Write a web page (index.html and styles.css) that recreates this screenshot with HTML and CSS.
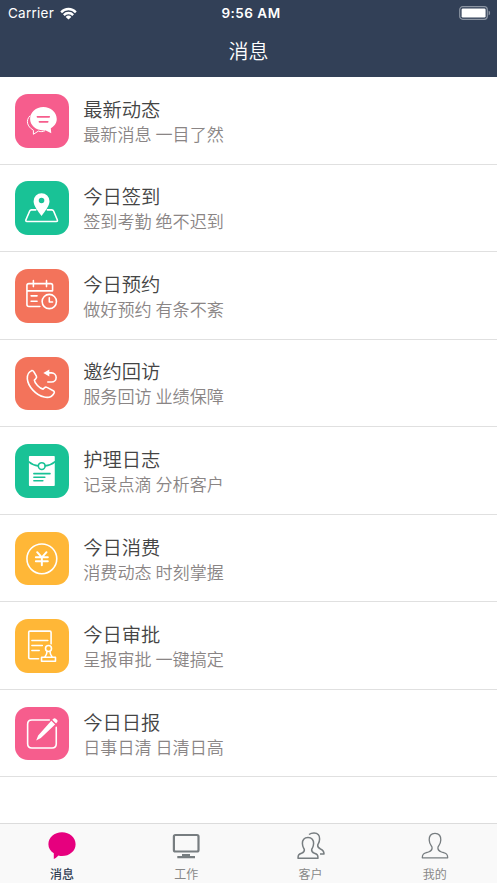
FILE: index.html
```html
<!DOCTYPE html>
<html lang="zh-CN">
<head>
<meta charset="utf-8">
<title>消息</title>
<link rel="stylesheet" href="styles.css">
</head>
<body>
<div class="app">
  <header class="header">
    <div class="status">
      <div class="carrier"><span>Carrier</span>
        <svg class="wifi" viewBox="0 0 17 13"><path d="M0.3 4.4A11.2 11.2 0 0 1 16.7 4.4L15 6.2A8.800 8.800 0 0 0 2 6.2ZM3 7.200A7.400 7.400 0 0 1 14 7.200L12.300 9A5.100 5.100 0 0 0 4.700 9ZM5.700 9.900A3.700 3.700 0 0 1 11.300 9.900L8.500 12.600Z"/></svg>
      </div>
      <div class="time">9:56 AM</div>
      <svg class="battery" viewBox="0 0 32 14"><rect class="shell" x=".7" y=".7" width="27.6" height="12.6" rx="3"/><rect x="2.6" y="2.5" width="24" height="9" rx="1.3"/><path class="cap" d="M29.6 4.7C31.6 5.2 31.6 8.8 29.6 9.3Z"/></svg>
    </div>
    <h1 class="title">消息</h1>
  </header>
  <main class="list">
    <section class="row">
      <svg class="tile pink" viewBox="0 0 54 54">
        <path class="thin" d="M15 22C10.500 26.500 12 32.500 18.500 36.500L18.500 40.500L23.500 37.300C26 38.200 28 38 30 37"/>
        <path class="fill" d="M28.500 13.200C36 13.200 42 18.300 42 25.200C42 29.500 39.500 32.500 36 34.500L36.500 39.500L30.500 36.500C22 37.500 15.200 32 15.200 25.200C15.200 18.300 21 13.200 28.500 13.200Z"/>
        <path class="cut" d="M22.500 23H34.500M24.500 28H33"/>
      </svg>
      <div class="copy"><h2>最新动态</h2><p>最新消息 一目了然</p></div>
    </section>
    <section class="row">
      <svg class="tile green" viewBox="0 0 54 54">
        <path class="line" d="M21 29H16.500Q15.300 29 14.800 30.200L11 39Q10.500 40.700 12 40.700H41.500Q43.200 40.700 42.500 39L38.800 30.200Q38.300 29 37 29H32.500"/>
        <path class="fill" fill-rule="evenodd" d="M26.700 12.300A8 8 0 0 1 34.700 20.300C34.700 25 30 30.500 26.700 35.300C23.400 30.500 18.700 25 18.700 20.300A8 8 0 0 1 26.700 12.300ZM26.700 16.900A2.800 2.800 0 1 0 26.700 22.500A2.800 2.800 0 1 0 26.700 16.900Z"/>
      </svg>
      <div class="copy"><h2>今日签到</h2><p>签到考勤 绝不迟到</p></div>
    </section>
    <section class="row">
      <svg class="tile coral" viewBox="0 0 54 54">
        <path class="line" d="M25 37.700H14Q12 37.700 12 35.700V16.500Q12 14.700 14 14.700H36Q37.800 14.700 37.800 16.500V22H12M18.500 11.700V17.700M31.700 11.700V17.700M16.200 27H22.200M16.200 32.500H22.200M34.500 29V33.200H37.800"/>
        <circle class="line" cx="34.500" cy="32.700" r="7.200"/>
      </svg>
      <div class="copy"><h2>今日预约</h2><p>做好预约 有条不紊</p></div>
    </section>
    <section class="row">
      <svg class="tile coral" viewBox="0 0 54 54">
        <path class="line" d="M16.800 13.700Q18 13.300 19 15L21.500 19.300Q22.200 20.700 20.800 22L19.500 23.200C19.800 26.500 24.500 31.600 28.200 32.300L29.800 30.800Q30.800 29.800 32.200 30.600L38.500 34Q40.200 35 39.200 36.500C37.500 39.500 34 41.300 29.500 40.300C21 38.500 13 29.500 12.400 22C12.100 18 14 15 16.800 13.700Z"/>
        <path class="fill" d="M28.500 16L34.500 12.500V19.500Z"/>
        <path class="line" d="M33 16H36.800A4.600 4.600 0 0 1 36.800 25.200H33"/>
      </svg>
      <div class="copy"><h2>邀约回访</h2><p>服务回访 业绩保障</p></div>
    </section>
    <section class="row">
      <svg class="tile green" viewBox="0 0 54 54">
        <rect class="fill" x="14" y="12" width="26" height="30.300" rx=".8"/>
        <path class="cut" d="M14 18Q18 21.500 23.400 22M40 18Q36 21.500 30.300 22M19 29.800H35.200M19 33.500H30M19 37H28"/>
        <circle class="cut" cx="26.900" cy="22.200" r="3.400"/>
      </svg>
      <div class="copy"><h2>护理日志</h2><p>记录点滴 分析客户</p></div>
    </section>
    <section class="row">
      <svg class="tile amber" viewBox="0 0 54 54">
        <circle class="line" cx="27" cy="27" r="15"/>
        <path class="yen" d="M22.300 20.300L27 25.500L31.700 20.300M27 25.500V33.500M21 25.500H33M21 29.500H33"/>
      </svg>
      <div class="copy"><h2>今日消费</h2><p>消费动态 时刻掌握</p></div>
    </section>
    <section class="row">
      <svg class="tile amber" viewBox="0 0 54 54">
        <path class="line" d="M23.700 40H15Q13.800 40 13.800 38.800V13.300Q13.800 12.200 15 12.200H35Q36.300 12.200 36.300 13.500V25M17 21.700H33M17 26.700H27.500M17 31.700H24.300"/>
        <circle class="line" cx="33.700" cy="29.700" r="3"/>
        <path class="line" d="M32.200 32.500C32.300 35.500 31.500 36.200 29.700 38.500M35.200 32.500C35.100 35.500 36 36.200 37.700 38.500M27 38.500H40.700V42.500H26.700V38.500Z"/>
      </svg>
      <div class="copy"><h2>今日审批</h2><p>呈报审批 一键搞定</p></div>
    </section>
    <section class="row">
      <svg class="tile pink" viewBox="0 0 54 54">
        <path class="line" d="M34.500 13H17Q12.700 13 12.700 17.300V37Q12.700 41.200 17 41.200H37.300Q41.500 41.200 41.500 37V20.500"/>
        <path class="fill" d="M36.500 13.800L40.300 17.600L26 31.200L21.300 33.600L23.300 28.600ZM37.500 12.800L39 11.500Q40 11 41 11.700L42.500 13.200Q43.200 14.200 42.500 15.200L41.300 16.600Z"/>
      </svg>
      <div class="copy"><h2>今日日报</h2><p>日事日清 日清日高</p></div>
    </section>
  </main>
  <nav class="tabs">
    <div class="tab active">
      <svg viewBox="0 0 30 30"><path class="bubble" d="M15 1.300C22.700 1.300 28.600 6.500 28.600 13.200C28.600 19.800 22.700 25 15 25Q13 25 11.500 24.500Q9.500 26.800 6.800 28V22.300C3.300 20 1.400 17 1.400 13.200C1.400 6.500 7.300 1.300 15 1.300Z"/></svg>
      <span>消息</span>
    </div>
    <div class="tab">
      <svg viewBox="0 0 30 30"><rect class="screen" x="2.900" y="4" width="24.600" height="16.500" rx="1.500"/><path class="stand" d="M11 23H19V25H24V27.200H6.300V25H11Z"/></svg>
      <span>工作</span>
    </div>
    <div class="tab">
      <svg viewBox="0 0 30 30"><path class="person front" d="M12 6.500C15.800 6.500 17.800 9 17.600 12.500C17.500 16 16.500 16.700 15.700 18.300C15.300 20.300 16 21.300 18.500 22.300C21 23.200 22 23.800 22 27.300H2C2 23.800 3 23.200 5.500 22.300C8 21.300 8.700 20.300 8.300 18.300C7.500 16.700 6.500 16 6.400 12.500C6.200 9 8.200 6.500 12 6.500Z"/><path class="person front" d="M13 3.500Q15 2 18 2C22 2 23.800 4.500 23.600 8C23.500 11.500 22.500 12.300 21.700 14C21.500 16 22.500 17 24.500 18C27 19 28 20 28 23H24"/></svg>
      <span>客户</span>
    </div>
    <div class="tab">
      <svg viewBox="0 0 30 30"><path class="person" d="M15 2.300C19.200 2.300 21 5.200 20.800 9C20.700 12.500 19.500 13.500 18 16C17.500 18.800 18.500 20 21.500 21C26 22.500 27.700 22.500 27.700 26.800H2.300C2.300 22.500 4 22.500 8.500 21C11.500 20 12.500 18.800 12 16C10.500 13.500 9.300 12.500 9.200 9C9 5.200 10.800 2.300 15 2.300Z"/></svg>
      <span>我的</span>
    </div>
  </nav>
</div>
</body>
</html>
```
FILE: styles.css
```css
* { box-sizing: border-box; }
body, h1, h2, p { margin: 0; }
body {
  font-family: "Noto Sans CJK SC", sans-serif;
  background: #fff;
}
.app {
  display: flex;
  flex-direction: column;
  height: 883px;
  overflow: hidden;
}
.header {
  flex: none;
  height: 77px;
  background: #324057;
  color: #fff;
}
.status {
  display: grid;
  grid-template-columns: 1fr auto 1fr;
  align-items: center;
  height: 26px;
  padding: 0 6px 0 8px;
  font: 13.5px/26px Inter, sans-serif;
}
.carrier { display: flex; align-items: center; gap: 6px; letter-spacing: .25px; }
.wifi { width: 17px; height: 13px; fill: #fff; }
.time { padding-left: 3px; font-weight: 600; letter-spacing: .5px; }
.battery { justify-self: end; width: 32px; height: 14px; fill: #fff; }
.battery .shell { fill: none; stroke: #8c95a3; stroke-width: 1.2; }
.battery .cap { fill: #8c95a3; }
.title {
  font-size: 20px;
  font-weight: 350;
  line-height: 50px;
  text-align: center;
}
.list { flex: 1; }
.row {
  display: flex;
  align-items: center;
  gap: 14.6px;
  height: 87.55px;
  padding: 1px 0 0 15px;
  border-bottom: 1px solid #e0e0e0;
}
.tile { flex: none; width: 53.7px; height: 53.7px; border-radius: 13px; }
.pink { background: #f65d8d; --tile: #f65d8d; }
.green { background: #19c296; --tile: #19c296; }
.coral { background: #f3735b; --tile: #f3735b; }
.amber { background: #ffb737; --tile: #ffb737; }
.fill { fill: #fff; }
.line, .thin, .cut, .yen {
  fill: none;
  stroke: #fff;
  stroke-width: 1.6;
  stroke-linecap: round;
  stroke-linejoin: round;
}
.thin { stroke-width: 1; }
.cut { stroke: var(--tile); }
.yen { stroke-width: 2; }
.copy { padding-top: 1px; }
.copy h2 {
  font-size: 19.3px;
  font-weight: 350;
  line-height: 25px;
  color: #444;
}
.copy p {
  font-size: 17.1px;
  font-weight: 350;
  line-height: 24px;
  color: #8a8585;
}
.tabs {
  flex: none;
  display: grid;
  grid-template-columns: repeat(4, 1fr);
  height: 60px;
  border-top: 1px solid #dcdcdc;
  background: #f9f9f9;
}
.tab {
  display: flex;
  flex-direction: column;
  align-items: center;
  padding-top: 7px;
  font-size: 12px;
  line-height: 18px;
  color: #888;
}
.tab svg { width: 30px; height: 30px; margin-bottom: 4px; }
.active { color: #323f55; font-weight: 500; }
.bubble { fill: #e6007e; }
.screen { fill: none; stroke: #777d80; stroke-width: 2.2; }
.stand { fill: #777d80; }
.person { fill: none; stroke: #777d80; stroke-width: 1.3; stroke-linejoin: round; }
.front { stroke-width: 1.5; }
```
